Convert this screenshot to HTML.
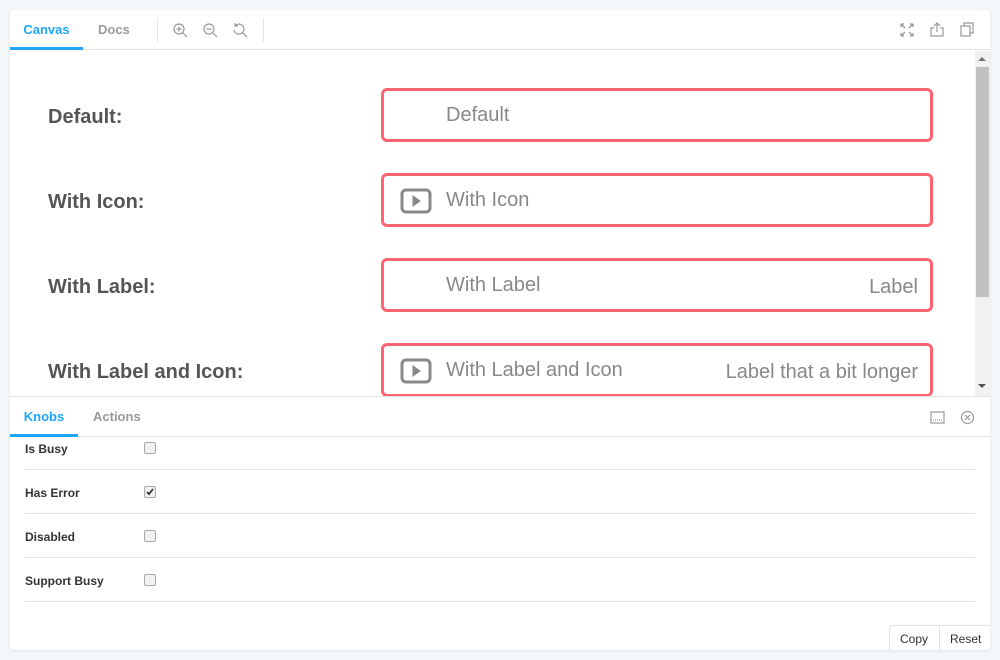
<!DOCTYPE html>
<html><head><style>
*{box-sizing:border-box;margin:0;padding:0}
body{width:1000px;height:660px;background:#f4f7fa;font-family:"Liberation Sans",sans-serif;position:relative;overflow:hidden}
.card{position:absolute;left:10px;top:10px;width:980px;height:640px;background:#fff;border-radius:4px;box-shadow:0 1px 3px rgba(0,0,0,.08);overflow:hidden}
.bar{position:absolute;left:0;top:0;width:980px;height:40px;border-bottom:1px solid #e3e3e3}
.tab{position:absolute;top:0;height:40px;line-height:40px;font-size:13px;font-weight:bold;color:#999}
.act{color:#1ea7fd;border-bottom:3px solid #1ea7fd}
.sep{position:absolute;top:8px;width:1px;height:24px;background:#e3e3e3}
.lbl{position:absolute;left:38px;font-size:20px;font-weight:bold;color:#555}
.inp{position:absolute;left:371px;width:552px;height:54px;border:3px solid #ff6470;border-radius:6px}
.inp .t{position:absolute;left:62px;top:13px;font-size:20px;color:#888}
.inp .r{position:absolute;right:12px;top:15px;font-size:20px;color:#888}
.inp svg{position:absolute;left:16px;top:11px}
.k{position:absolute;left:15px;font-size:12px;font-weight:bold;color:#333}
.cb{position:absolute;left:134px;width:12px;height:12px;border:1px solid #aaa;border-radius:2px;background:#f0f0f0}
.ln{position:absolute;left:15px;width:950px;height:1px;background:#e3e3e3}
</style></head><body>
<div class="card">
<div class="bar">
<div class="tab act" style="left:0;width:73px;text-align:center">Canvas</div>
<div class="tab" style="left:88px">Docs</div>
<div class="sep" style="left:147px"></div>
<div class="sep" style="left:253px"></div>
<svg style="position:absolute;left:162px;top:12px" width="16" height="16" fill="none" stroke="#999" stroke-width="1.2"><circle cx="7" cy="7" r="5"/><path d="M11 11l4 4M4.5 7h5M7 4.5v5"/></svg>
<svg style="position:absolute;left:192px;top:12px" width="16" height="16" fill="none" stroke="#999" stroke-width="1.2"><circle cx="7" cy="7" r="5"/><path d="M11 11l4 4M4.5 7h5"/></svg>
<svg style="position:absolute;left:222px;top:12px" width="16" height="16" fill="none" stroke="#999" stroke-width="1.2"><path d="M3 4A5 5 0 1 1 2 8M3 1v3h3M11 11l4 4"/></svg>
<svg style="position:absolute;left:890px;top:13px" width="14" height="14" fill="none" stroke="#999" stroke-width="1.3"><path d="M1 1l4 4M13 1l-4 4M1 13l4-4M13 13l-4-4M1 1h3M1 1v3M13 1h-3M13 1v3M1 13h3M1 13v-3M13 13h-3M13 13v-3"/></svg>
<svg style="position:absolute;left:920px;top:12px" width="14" height="15" fill="none" stroke="#999" stroke-width="1.2"><path d="M4 6H1v8h12V6h-3M7 10V1M4 4l3-3 3 3"/></svg>
<svg style="position:absolute;left:950px;top:12px" width="15" height="15" fill="none" stroke="#999" stroke-width="1.2"><rect x="1" y="4" width="9" height="10"/><path d="M4 4V1h9v10h-3"/></svg>
</div>
<div style="position:absolute;left:965px;top:41px;width:15px;height:346px;background:#f1f1f1"></div>
<div style="position:absolute;left:966px;top:57px;width:13px;height:230px;background:#c1c1c1"></div>
<div style="position:absolute;left:968px;top:47px;border:4px solid transparent;border-bottom:4px solid #777;border-top:0"></div>
<div style="position:absolute;left:968px;top:374px;border:4px solid transparent;border-top:4px solid #555;border-bottom:0"></div>

<div class="lbl" style="top:96px">Default:</div>
<div class="lbl" style="top:181px">With Icon:</div>
<div class="lbl" style="top:266px">With Label:</div>
<div class="lbl" style="top:351px">With Label and Icon:</div>

<div class="inp" style="top:78px"><span class="t">Default</span></div>
<div class="inp" style="top:163px"><svg width="32" height="28" fill="none" stroke="#888" stroke-width="3"><rect x="2" y="3" width="28" height="22" rx="4"/><path d="M13 9v10l7-5z" fill="#888" stroke-width="1"/></svg><span class="t">With Icon</span></div>
<div class="inp" style="top:248px"><span class="t">With Label</span><span class="r">Label</span></div>
<div class="inp" style="top:333px"><svg width="32" height="28" fill="none" stroke="#888" stroke-width="3"><rect x="2" y="3" width="28" height="22" rx="4"/><path d="M13 9v10l7-5z" fill="#888" stroke-width="1"/></svg><span class="t">With Label and Icon</span><span class="r">Label that a bit longer</span></div>

<div style="position:absolute;left:0;top:386px;width:980px;height:254px;background:#fff;border-top:1px solid #e3e3e3">
<div style="position:absolute;left:0;top:0;width:980px;height:40px;border-bottom:1px solid #e3e3e3"></div>
<div class="tab act" style="left:0;width:68px;text-align:center;font-size:13px">Knobs</div>
<div class="tab" style="left:83px">Actions</div>
<svg style="position:absolute;left:920px;top:14px" width="15" height="13" fill="none" stroke="#999" stroke-width="1.2"><rect x="1" y="1" width="13" height="11"/><path d="M3 9h9" stroke-dasharray="1 1"/></svg>
<svg style="position:absolute;left:950px;top:13px" width="15" height="15" fill="none" stroke="#999" stroke-width="1.2"><circle cx="7.5" cy="7.5" r="6"/><path d="M5 5l5 5M10 5l-5 5"/></svg>
<div class="k" style="top:45px">Is Busy</div><div class="cb" style="top:45px"></div><div class="ln" style="top:72px"></div>
<div class="k" style="top:89px">Has Error</div><div class="cb" style="top:89px"><svg width="10" height="10" style="position:absolute;left:0;top:0"><path d="M2 5l2 2 4-5" fill="none" stroke="#333" stroke-width="1.8"/></svg></div><div class="ln" style="top:116px"></div>
<div class="k" style="top:133px">Disabled</div><div class="cb" style="top:133px"></div><div class="ln" style="top:160px"></div>
<div class="k" style="top:177px">Support Busy</div><div class="cb" style="top:177px"></div><div class="ln" style="top:204px"></div>
<div style="position:absolute;left:879px;top:228px;width:101px;height:26px;border:1px solid #e3e3e3;border-right:0;border-bottom:0;border-radius:4px 0 0 0;font-size:12px;color:#333">
<span style="position:absolute;left:10px;top:6px">Copy</span>
<div style="position:absolute;left:49px;top:0;width:1px;height:26px;background:#e3e3e3"></div>
<span style="position:absolute;left:60px;top:6px">Reset</span></div>
</div>
</div>
</body></html>
